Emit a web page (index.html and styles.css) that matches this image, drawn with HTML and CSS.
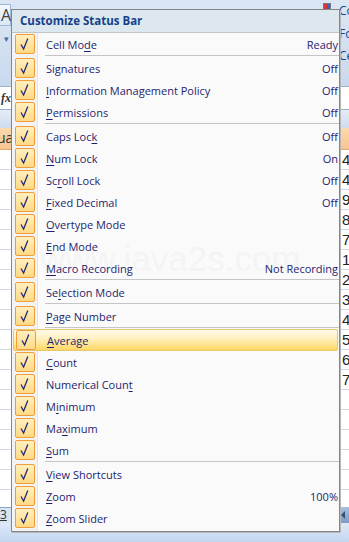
FILE: index.html
```html
<!DOCTYPE html>
<html lang="en">
<head>
    <meta charset="UTF-8">
    <title>Customize Status Bar</title>
    <link rel="stylesheet" href="styles.css">
</head>
<body>
<div class="app">
    <div class="ribbon">
        <div class="rb_row rb_top">
            <span class="font_btn">A</span>
            <span class="rb_right"><span class="style_icon"></span><span class="cut">Co</span></span>
        </div>
        <div class="rb_row rb_mid">
            <span class="drop">&#9662;</span>
            <span class="cut">Fo</span>
        </div>
        <div class="rb_row rb_low">
            <span></span>
            <span class="cut">Ce</span>
        </div>
    </div>
    <div class="formula">
        <span class="fx">fx</span>
    </div>
    <div class="gap_band"></div>
    <div class="col_head">
        <span class="cut_l">ua</span>
        <span></span>
    </div>
    <div class="grid">
        <div class="cell_row"><span></span><span class="val">4</span></div>
        <div class="cell_row"><span></span><span class="val">4</span></div>
        <div class="cell_row"><span></span><span class="val">9</span></div>
        <div class="cell_row"><span></span><span class="val">8</span></div>
        <div class="cell_row"><span></span><span class="val">7</span></div>
        <div class="cell_row"><span></span><span class="val">1</span></div>
        <div class="cell_row"><span></span><span class="val">2</span></div>
        <div class="cell_row"><span></span><span class="val">3</span></div>
        <div class="cell_row"><span></span><span class="val">4</span></div>
        <div class="cell_row"><span></span><span class="val">5</span></div>
        <div class="cell_row"><span></span><span class="val">6</span></div>
        <div class="cell_row"><span></span><span class="val">7</span></div>
        <div class="cell_row"><span></span><span class="val"></span></div>
        <div class="cell_row"><span></span><span class="val"></span></div>
        <div class="cell_row"><span></span><span class="val"></span></div>
        <div class="cell_row"><span></span><span class="val"></span></div>
        <div class="cell_row"><span></span><span class="val"></span></div>
        <div class="cell_row"><span></span><span class="val"></span></div>
    </div>
    <div class="tabs">
        <span class="tab">3</span>
        <span class="scroll_btn"></span>
    </div>
    <div class="status"></div>

    <div class="menu">
        <div class="menu_title">Customize Status Bar</div>
        <div class="menu_body">
            <div class="watermark">www.java2s.com</div>
            <div class="item"><span class="chk"></span><span class="lbl">Cell Mo<u>d</u>e</span><span class="val_r">Ready</span></div>
            <div class="sep"></div>
            <div class="item"><span class="chk"></span><span class="lbl">Si<u>g</u>natures</span><span class="val_r">Off</span></div>
            <div class="item"><span class="chk"></span><span class="lbl"><u>I</u>nformation Management Policy</span><span class="val_r">Off</span></div>
            <div class="item"><span class="chk"></span><span class="lbl"><u>P</u>ermissions</span><span class="val_r">Off</span></div>
            <div class="sep"></div>
            <div class="item"><span class="chk"></span><span class="lbl">Caps Loc<u>k</u></span><span class="val_r">Off</span></div>
            <div class="item"><span class="chk"></span><span class="lbl"><u>N</u>um Lock</span><span class="val_r">On</span></div>
            <div class="item"><span class="chk"></span><span class="lbl">Sc<u>r</u>oll Lock</span><span class="val_r">Off</span></div>
            <div class="item"><span class="chk"></span><span class="lbl"><u>F</u>ixed Decimal</span><span class="val_r">Off</span></div>
            <div class="item"><span class="chk"></span><span class="lbl"><u>O</u>vertype Mode</span><span class="val_r"></span></div>
            <div class="item"><span class="chk"></span><span class="lbl"><u>E</u>nd Mode</span><span class="val_r"></span></div>
            <div class="item"><span class="chk"></span><span class="lbl"><u>M</u>acro Recording</span><span class="val_r">Not Recording</span></div>
            <div class="sep"></div>
            <div class="item"><span class="chk"></span><span class="lbl">Se<u>l</u>ection Mode</span><span class="val_r"></span></div>
            <div class="sep"></div>
            <div class="item"><span class="chk"></span><span class="lbl"><u>P</u>age Number</span><span class="val_r"></span></div>
            <div class="sep"></div>
            <div class="item hot"><span class="chk"></span><span class="lbl"><u>A</u>verage</span><span class="val_r"></span></div>
            <div class="item"><span class="chk"></span><span class="lbl"><u>C</u>ount</span><span class="val_r"></span></div>
            <div class="item"><span class="chk"></span><span class="lbl">Numerical Coun<u>t</u></span><span class="val_r"></span></div>
            <div class="item"><span class="chk"></span><span class="lbl">M<u>i</u>nimum</span><span class="val_r"></span></div>
            <div class="item"><span class="chk"></span><span class="lbl">Ma<u>x</u>imum</span><span class="val_r"></span></div>
            <div class="item"><span class="chk"></span><span class="lbl"><u>S</u>um</span><span class="val_r"></span></div>
            <div class="sep"></div>
            <div class="item"><span class="chk"></span><span class="lbl"><u>V</u>iew Shortcuts</span><span class="val_r"></span></div>
            <div class="item"><span class="chk"></span><span class="lbl"><u>Z</u>oom</span><span class="val_r">100%</span></div>
            <div class="item"><span class="chk"></span><span class="lbl"><u>Z</u>oom Slider</span><span class="val_r"></span></div>
        </div>
    </div>
</div>
</body>
</html>
```

FILE: styles.css
```css
* {
    margin: 0;
    padding: 0;
    box-sizing: border-box;
}
html, body {
    width: 349px;
    height: 542px;
    overflow: hidden;
}
body {
    font-family: "Open Sans", "Liberation Sans", sans-serif;
    font-size: 11px;
    background-color: #ffffff;
}
.app {
    position: relative;
    width: 349px;
    height: 542px;
    display: flex;
    flex-direction: column;
}

/* background: excel window */
.ribbon {
    height: 86px;
    background: linear-gradient(#dbe6f4, #c9d9ed);
    display: flex;
    flex-direction: column;
}
.rb_row {
    display: flex;
    justify-content: space-between;
    align-items: center;
    height: 22px;
    color: #15428b;
}
.rb_top {
    height: 22px;
    align-items: flex-start;
}
.font_btn {
    width: 11px;
    height: 22px;
    margin-top: 4px;
    background: linear-gradient(#f4f8fd, #dce7f5);
    border: 1px solid #9fb6d4;
    border-left: 0;
    font-size: 16px;
    line-height: 20px;
    color: #444;
    padding-left: 1px;
}
.rb_right {
    display: flex;
    align-items: flex-start;
    gap: 8px;
    padding-top: 2px;
}
.style_icon {
    width: 8px;
    height: 8px;
    margin-top: 1px;
    background: linear-gradient(90deg, #d33 0 50%, #36c 50% 100%);
    border: 1px solid #777;
}
.cut {
    width: 10px;
    overflow: hidden;
    font-size: 12px;
    white-space: nowrap;
}
.drop {
    font-size: 9px;
    color: #4a6a98;
    padding-left: 4px;
    margin-top: 10px;
}
.formula {
    height: 24px;
    background: #ffffff;
    border-top: 1px solid #9ab0cc;
    border-bottom: 1px solid #9ab0cc;
    display: flex;
    align-items: center;
}
.fx {
    font-family: "Liberation Serif", serif;
    font-style: italic;
    font-weight: bold;
    font-size: 12px;
    color: #333;
    padding-left: 1px;
}
.gap_band {
    height: 18px;
    background: linear-gradient(#e4ecf7, #cfdcee);
}
.col_head {
    height: 22px;
    display: flex;
    justify-content: space-between;
    background: linear-gradient(#fbd9ad, #f8c590);
    border-bottom: 1px solid #e2a86a;
}
.cut_l {
    font-size: 14px;
    color: #333;
    line-height: 20px;
    margin-left: -3px;
}
.grid {
    flex: 1;
    overflow: hidden;
    background: #ffffff;
}
.cell_row {
    height: 20px;
    border-bottom: 1px solid #d0d7e5;
    display: flex;
    justify-content: space-between;
    align-items: center;
}
.val {
    width: 10px;
    font-family: "Liberation Sans", sans-serif;
    font-size: 15px;
    color: #222;
    border-left: 2px solid #6b9bd8;
    padding-left: 1px;
    height: 16px;
    line-height: 16px;
}
.tabs {
    height: 16px;
    display: flex;
    justify-content: space-between;
    background: #e9eef6;
}
.tab {
    width: 11px;
    background: #d9e4f2;
    border-top: 1px solid #8aa6cc;
    font-size: 12px;
    line-height: 14px;
    color: #333;
    text-decoration: underline;
}
.scroll_btn {
    width: 10px;
    background: linear-gradient(#a8c1e2, #7d9bc8);
    position: relative;
}
.scroll_btn::after {
    content: "";
    position: absolute;
    left: 2px;
    top: 4px;
    border-right: 4px solid #34527c;
    border-top: 4px solid transparent;
    border-bottom: 4px solid transparent;
}
.status {
    height: 19px;
    background: linear-gradient(#dfe9f7, #c2d6f0);
}

/* the menu */
.menu {
    position: absolute;
    left: 11px;
    top: 9px;
    width: 329px;
    height: 523px;
    background: #fafafa;
    border: 1px solid #868686;
    box-shadow: 1px 1px 0 #b8b8b8;
    display: flex;
    flex-direction: column;
}
.menu_title {
    height: 23px;
    background: #dde7ee;
    border-bottom: 1px solid #c5c5c5;
    color: #15428b;
    font-weight: bold;
    font-size: 11.5px;
    line-height: 21px;
    padding-left: 8px;
}
.menu_body {
    position: relative;
    flex: 1;
    background: linear-gradient(90deg, #f3f3f3 0 25px, #e2e3e3 25px 26px, #ffffff 26px 27px, #fafafa 27px);
}
.watermark {
    position: absolute;
    left: 28px;
    top: 206px;
    font-family: "Liberation Sans", sans-serif;
    font-size: 35px;
    color: #f4f4f4;
    pointer-events: none;
}
.item {
    position: relative;
    height: 22px;
    display: flex;
    align-items: center;
    color: #1e1e6e;
}
.item.hot {
    margin-left: 1px;
    margin-right: 1px;
    background: linear-gradient(#fffbe8, #fff1c2 40%, #ffd764 100%);
    border: 1px solid #e8c66a;
    border-radius: 2px;
}
.chk {
    width: 20px;
    height: 20px;
    margin-left: 3px;
    border: 1px solid #f29b3c;
    border-radius: 2px;
    background-image: url("data:image/svg+xml,%3Csvg xmlns='http://www.w3.org/2000/svg' width='18' height='18'%3E%3Cpath d='M5 9.5 L7.6 14 L11.8 3.5' fill='none' stroke='%23232c78' stroke-width='1.3'/%3E%3C/svg%3E"), linear-gradient(#ffefbf, #ffda84);
    flex: none;
}
.item.hot .chk {
    margin-left: 2px;
}
.lbl {
    flex: 1;
    padding-left: 11px;
    white-space: nowrap;
}
.lbl u {
    text-underline-offset: 2px;
}
.val_r {
    padding-right: 1px;
    white-space: nowrap;
}
.sep {
    height: 2px;
    margin-left: 33px;
    border-top: 1px solid #c5c5c5;
}
```
